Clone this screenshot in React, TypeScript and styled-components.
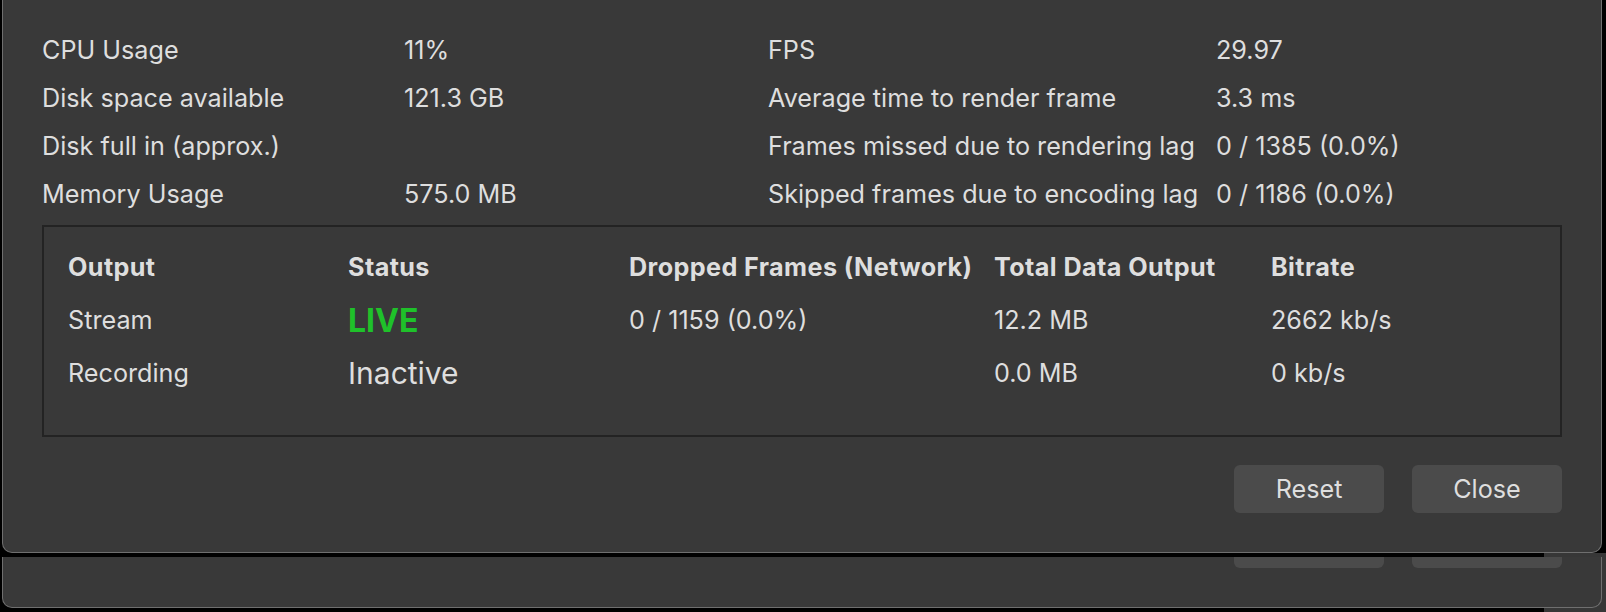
import React from "react";
import styled, { createGlobalStyle } from "styled-components";

const GlobalStyle = createGlobalStyle`
  html, body {
    margin: 0;
    padding: 0;
    background: #000;
    overflow: hidden;
  }
  * { box-sizing: border-box; }
`;

const FONT = `Inter, "Liberation Sans", Arial, sans-serif`;
const TEXT = "#dedede";
const BG = "#393939";

const Screen = styled.div`
  position: relative;
  width: 1606px;
  height: 612px;
  padding: 0 4px 0 2px;
  display: flex;
  flex-direction: column;
  gap: 4px;
  font-family: ${FONT};
  color: ${TEXT};
  background: #000;
`;

const BehindWindow = styled.div`
  position: absolute;
  left: 1544px;
  top: 553px;
  right: 0;
  bottom: 0;
  background: #373737;
  z-index: 0;
`;

const Window = styled.div<{ $h: number }>`
  position: relative;
  z-index: 1;
  height: ${(p) => p.$h}px;
  flex: none;
  background: ${BG};
  border: 1px solid #6f6f6f;
  border-top: none;
  border-radius: 0 0 10px 10px;
  padding: 0 39px;
  display: flex;
  flex-direction: column;
  overflow: hidden;
`;

const StatsGrid = styled.div`
  display: grid;
  grid-template-columns: 362px 364px 448px 1fr;
  grid-auto-rows: 48px;
  padding-top: 26px;
  font-size: 25.2px;
  line-height: 48px;
  white-space: nowrap;
`;

const Cell = styled.div``;

const GroupBox = styled.div`
  margin-top: 7px;
  height: 212px;
  border: 2px solid #232323;
  padding: 14px 0 0 24px;
`;

const OutputTable = styled.div`
  display: grid;
  grid-template-columns: 280px 281px 365px 277px 1fr;
  grid-auto-rows: 53px;
  font-size: 25.2px;
  line-height: 53px;
  white-space: nowrap;
`;

const HeadCell = styled.div`
  font-weight: 700;
  letter-spacing: 0.4px;
`;

const StatusCell = styled.div<{ $live?: boolean }>`
  font-size: ${(p) => (p.$live ? 32 : 30)}px;
  font-weight: ${(p) => (p.$live ? 700 : 400)};
  color: ${(p) => (p.$live ? "#1fc12a" : TEXT)};
`;

const ButtonRow = styled.div`
  margin-top: 28px;
  display: flex;
  justify-content: flex-end;
  gap: 28px;
`;

const Button = styled.button`
  width: 150px;
  height: 48px;
  border: none;
  border-radius: 6px;
  background: #4b4b4b;
  color: ${TEXT};
  font-family: ${FONT};
  font-size: 25.2px;
  padding: 0;
  cursor: pointer;
`;

const StubRow = styled.div`
  display: flex;
  justify-content: flex-end;
  gap: 28px;
`;

const ButtonStub = styled.div`
  width: 150px;
  height: 11px;
  background: #4b4b4b;
  border-radius: 0 0 6px 6px;
`;

const stats: [string, string, string, string][] = [
  ["CPU Usage", "11%", "FPS", "29.97"],
  ["Disk space available", "121.3 GB", "Average time to render frame", "3.3 ms"],
  ["Disk full in (approx.)", "", "Frames missed due to rendering lag", "0 / 1385 (0.0%)"],
  ["Memory Usage", "575.0 MB", "Skipped frames due to encoding lag", "0 / 1186 (0.0%)"],
];

const outputs = [
  { name: "Stream", status: "LIVE", live: true, dropped: "0 / 1159 (0.0%)", total: "12.2 MB", bitrate: "2662 kb/s" },
  { name: "Recording", status: "Inactive", live: false, dropped: "", total: "0.0 MB", bitrate: "0 kb/s" },
];

export default function App() {
  return (
    <>
      <GlobalStyle />
      <Screen>
        <BehindWindow />
        <Window $h={553}>
          <StatsGrid>
            {stats.map((r) =>
              r.map((c, i) => <Cell key={r[0] + i}>{c}</Cell>)
            )}
          </StatsGrid>
          <GroupBox>
            <OutputTable>
              <HeadCell>Output</HeadCell>
              <HeadCell>Status</HeadCell>
              <HeadCell>Dropped Frames (Network)</HeadCell>
              <HeadCell>Total Data Output</HeadCell>
              <HeadCell>Bitrate</HeadCell>
              {outputs.map((o) => (
                <React.Fragment key={o.name}>
                  <Cell>{o.name}</Cell>
                  <StatusCell $live={o.live}>{o.status}</StatusCell>
                  <Cell>{o.dropped}</Cell>
                  <Cell>{o.total}</Cell>
                  <Cell>{o.bitrate}</Cell>
                </React.Fragment>
              ))}
            </OutputTable>
          </GroupBox>
          <ButtonRow>
            <Button>Reset</Button>
            <Button>Close</Button>
          </ButtonRow>
        </Window>
        <Window $h={51}>
          <StubRow>
            <ButtonStub />
            <ButtonStub />
          </StubRow>
        </Window>
      </Screen>
    </>
  );
}
